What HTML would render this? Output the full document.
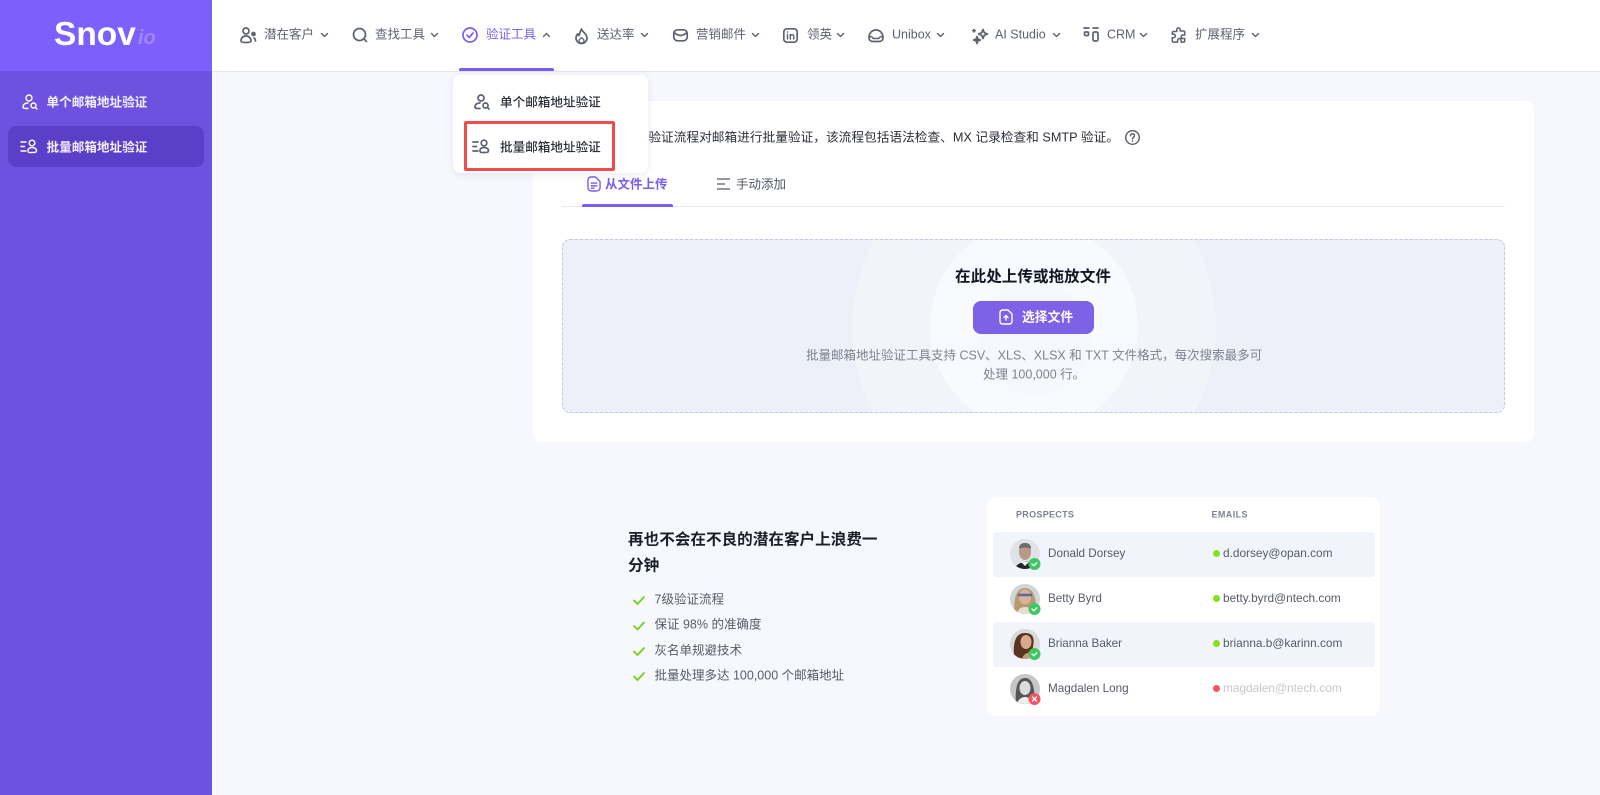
<!DOCTYPE html>
<html lang="zh"><head><meta charset="utf-8"><title>批量邮箱地址验证</title>
<style>
*{box-sizing:border-box}
html,body{margin:0;padding:0;width:1600px;height:795px;overflow:hidden;background:#f6f8fd;font-family:"Liberation Sans","Noto Sans CJK SC",sans-serif}
.a{position:absolute}
.t{position:absolute;white-space:nowrap;transform:translateY(-50%);line-height:1.2}
svg{position:absolute;overflow:visible;fill:none}
.n{font-size:12.5px;color:#5c6270;top:35px}
.i{stroke:#5c6270;stroke-width:1.7;stroke-linecap:round;stroke-linejoin:round}
.c{stroke-width:1.4}
.row{position:absolute;left:993px;width:382px;height:45px;background:#f1f4fb;border-radius:3px}
.nm{font-size:11.700px;color:#565b66;left:1048px}
.em{font-size:11.850px;color:#565b66;left:1223px}
.dot{position:absolute;left:1212.500px;width:7px;height:7px;border-radius:50%;background:#86e01a}
.ck{font-size:12.500px;color:#565c68;left:654.500px}
</style></head><body>
<!-- sidebar -->
<div class="a" style="left:0;top:0;width:212px;height:795px;background:#6c53df"></div>
<div class="a" style="left:0;top:0;width:212px;height:71px;background:#7b60fb"></div>
<div class="t" style="left:54px;top:35px;font-size:33.500px;font-weight:700;color:#fff">Snov</div>
<div class="t" style="left:138px;top:38px;font-size:20px;font-weight:700;font-style:italic;color:#9c87fc">io</div>
<div class="a" style="left:8px;top:126px;width:196px;height:41px;border-radius:8px;background:#5a3fc8"></div>
<svg style="left:22px;top:94px" width="16" height="16" viewBox="0 0 16 16" stroke="#fff" stroke-width="1.400" stroke-linecap="round"><circle cx="7" cy="4" r="3"/><path d="M6 9C3 9 1 10.500 1 13c0 1.500 2 1.500 5 1.500"/><circle cx="11.500" cy="11.500" r="2.500"/><path d="M13.500 13.500l1.500 1.500"/></svg>
<div class="t" style="left:46.500px;top:102.500px;font-size:12.600px;font-weight:700;color:#f3f0ff">单个邮箱地址验证</div>
<svg style="left:20px;top:139px" width="18" height="15" viewBox="0 0 18 15" stroke="#fff" stroke-width="1.400" stroke-linecap="round"><path d="M1 3h5M1 7.500h3.500M1 12h5"/><circle cx="12" cy="4" r="2.800"/><path d="M8 11.500c0-2 2-3 4-3s4.500 1 4.500 3-1.500 2-4.500 2-4 .5-4-2z"/></svg>
<div class="t" style="left:46.500px;top:147.500px;font-size:12.600px;font-weight:700;color:#f3f0ff">批量邮箱地址验证</div>
<!-- header -->
<div class="a" style="left:212px;top:0;width:1388px;height:72px;background:#fff;border-bottom:1px solid #e3e6ed"></div>
<div class="a" style="left:459px;top:68px;width:95px;height:3px;background:#7b5cf0;border-radius:2px 2px 0 0"></div>
<svg class="i" style="left:240px;top:27px" width="17" height="17" viewBox="0 0 17 17"><circle cx="6" cy="4" r="3"/><path d="M1 14c0-3 2-5 5-5s5 2 5 5c0 1-1 1.500-5 1.500S1 15 1 14z"/><circle cx="13.500" cy="7" r="1.500" fill="#5c6270"/><path d="M14 11c1 .5 1.500 1.500 1.500 3"/></svg>
<div class="t n" style="left:264px">潜在客户</div>
<svg class="i" style="left:352px;top:27px" width="16" height="16" viewBox="0 0 16 16" stroke-width="1.900"><circle cx="7.500" cy="7.500" r="6"/><path d="M12 12l2.500 2.500"/></svg>
<div class="t n" style="left:375px">查找工具</div>
<svg class="i" style="left:462px;top:27px;stroke:#7b5cf0" width="16" height="16" viewBox="0 0 16 16"><circle cx="8" cy="8" r="7"/><path d="M5 8.200l2.200 2.200L11 6"/></svg>
<div class="t n" style="left:486px;color:#7b5cf0">验证工具</div>
<svg class="i" style="left:575px;top:28px" width="13" height="16" viewBox="0 0 13 16"><path d="M6.500 1c.5 3 5.500 4.500 5.500 9A5.500 5.500 0 0 1 1 10c0-2 .8-3.200 1.800-4.200.3 1.300.8 1.700 1.300 1.700C4.700 5.500 5.500 3 6.500 1z"/><path d="M6.500 15c-1.500 0-2.500-1-2.500-2.300 0-1.500 1.700-2.200 2.500-3.200.8 1 2.500 1.700 2.500 3.200C9 14 8 15 6.500 15z" stroke-width="1.300"/></svg>
<div class="t n" style="left:597px">送达率</div>
<svg class="i" style="left:673px;top:29px" width="15" height="12.500" viewBox="0 0 15 12.500"><rect x=".8" y=".8" width="13.400" height="11" rx="3.800"/><path d="M1.200 3.800C4 5.800 5.500 6.500 7.500 6.500s3.500-.7 6.300-2.700"/></svg>
<div class="t n" style="left:696px">营销邮件</div>
<svg class="i" style="left:783px;top:28px" width="15" height="15" viewBox="0 0 15 15"><rect x=".8" y=".8" width="13.400" height="13.400" rx="3.200"/><path stroke-width="1.400" d="M4.500 6.500v4.500M4.500 4v.3M7.300 11V6.500M7.300 8.500c0-2 3.500-2.700 3.500 0V11"/></svg>
<div class="t n" style="left:807px">领英</div>
<svg class="i" style="left:868px;top:29px" width="16" height="13.500" viewBox="0 0 16 13.500"><path d="M1 8.500C1 4 4 1 8 1s7 3 7 7.500c0 2.700-1.700 4-4 4H5c-2.300 0-4-1.300-4-4z"/><path d="M1.300 7.500c2.700 0 3.500 1 4 2h5.400c.5-1 1.300-2 4-2" stroke-width="1.500"/></svg>
<div class="t n" style="left:892px">Unibox</div>
<svg class="i" style="left:972px;top:28px" width="17" height="16" viewBox="0 0 17 16" stroke-width="1.300"><path d="M11 1.500l1.300 3.200 3.200 1.300-3.200 1.300L11 10.500 9.700 7.300 6.500 6l3.200-1.300z"/><path d="M5 8.500l.9 2.600 2.600.9-2.600.9L5 15.500l-.9-2.600L1.500 12l2.600-.9z" fill="#5c6270"/><path d="M2 1.500v2.400M.8 2.700h2.400"/></svg>
<div class="t n" style="left:995px">AI Studio</div>
<svg class="i" style="left:1083px;top:27px" width="16" height="15" viewBox="0 0 16 15"><path d="M1 1h5M10 1h5"/><rect x="1.500" y="5" width="4" height="3.500" rx="1"/><rect x="10" y="5" width="5" height="9" rx="1.500"/></svg>
<div class="t n" style="left:1107px">CRM</div>
<svg class="i" style="left:1171px;top:27px" width="15" height="16" viewBox="0 0 16 18"><path d="M6 5V3a2 2 0 0 1 4 0v1.500h3.500c1 0 1.500.5 1.500 1.500v3h-2a2 2 0 0 0 0 4h2v2.500c0 1-.5 1.500-1.500 1.500H11v-2a2 2 0 0 0-4 0v2H2.500C1.500 17 1 16.500 1 15.500V12h1.500a2 2 0 0 0 0-4H1V6.500C1 5.500 1.500 5 2.500 5z"/></svg>
<div class="t n" style="left:1195px">扩展程序</div>
<svg class="i c" style="left:320.500px;top:32.500px" width="7" height="4" viewBox="0 0 7 4"><path d="M.5.500L3.500 3.500 6.500.500"/></svg>
<svg class="i c" style="left:430.500px;top:32.500px" width="7" height="4" viewBox="0 0 7 4"><path d="M.5.500L3.500 3.500 6.500.500"/></svg>
<svg class="i c" style="left:542.500px;top:32.500px" width="7" height="4" viewBox="0 0 7 4"><path d="M.5 3.500L3.500.5l3 3"/></svg>
<svg class="i c" style="left:640.500px;top:32.500px" width="7" height="4" viewBox="0 0 7 4"><path d="M.5.500L3.500 3.500 6.500.500"/></svg>
<svg class="i c" style="left:751.500px;top:32.500px" width="7" height="4" viewBox="0 0 7 4"><path d="M.5.500L3.500 3.500 6.500.500"/></svg>
<svg class="i c" style="left:836.500px;top:32.500px" width="7" height="4" viewBox="0 0 7 4"><path d="M.5.500L3.500 3.500 6.500.500"/></svg>
<svg class="i c" style="left:936.500px;top:32.500px" width="7" height="4" viewBox="0 0 7 4"><path d="M.5.500L3.500 3.500 6.500.500"/></svg>
<svg class="i c" style="left:1052.500px;top:32.500px" width="7" height="4" viewBox="0 0 7 4"><path d="M.5.500L3.500 3.500 6.500.500"/></svg>
<svg class="i c" style="left:1139.500px;top:32.500px" width="7" height="4" viewBox="0 0 7 4"><path d="M.5.500L3.500 3.500 6.500.500"/></svg>
<svg class="i c" style="left:1251.500px;top:32.500px" width="7" height="4" viewBox="0 0 7 4"><path d="M.5.500L3.500 3.500 6.500.500"/></svg>
<!-- main card -->
<div class="a" style="left:533px;top:101px;width:1001px;height:341px;background:#fff;border-radius:8px"></div>
<div class="t" style="right:481px;top:138px;font-size:12.700px;color:#2b2f38">使用7级验证流程对邮箱进行批量验证，该流程包括语法检查、MX 记录检查和 SMTP 验证。</div>
<svg style="left:1125px;top:130px" width="15" height="15" viewBox="0 0 15 15" stroke="#555b68" stroke-width="1.400" stroke-linecap="round"><circle cx="7.500" cy="7.500" r="6.800"/><path d="M5.500 5.800c0-2.600 4-2.600 4 0 0 1.600-2 1.500-2 3.200"/><path d="M7.500 11v.2"/></svg>
<svg style="left:587px;top:176px" width="14" height="16" viewBox="0 0 15 17" stroke="#7b5cf0" stroke-width="1.500" stroke-linecap="round" stroke-linejoin="round"><path d="M4.500 1H9l5 5v6c0 2.500-1.500 4-4 4H5c-2.500 0-4-1.500-4-4V5c0-2.500 1-4 3.500-4z"/><path d="M4.500 7.500h6M4.500 10.500h6M4.500 13h3"/></svg>
<div class="t" style="left:605px;top:184.500px;font-size:12.500px;font-weight:700;color:#7b5cf0">从文件上传</div>
<div class="a" style="left:562px;top:206px;width:943px;height:1px;background:#e8ebf2"></div>
<div class="a" style="left:582px;top:204px;width:91px;height:3px;background:#7b5cf0;border-radius:2px 2px 0 0"></div>
<svg style="left:717px;top:178px" width="14" height="12" viewBox="0 0 14 12" stroke="#555b68" stroke-width="1.200"><path d="M0 1h13M0 6h8M0 11h13"/></svg>
<div class="t" style="left:736px;top:184.500px;font-size:12.500px;color:#4f5561">手动添加</div>
<!-- upload -->
<div class="a" style="left:562px;top:239px;width:943px;height:174px;background:#edf0f8;border:1px dashed #c3c9dc;border-radius:8px;overflow:hidden">
<div class="a" style="left:289px;top:-95px;width:364px;height:364px;border-radius:50%;background:#f2f4fa"></div>
<div class="a" style="left:367px;top:-18px;width:208px;height:208px;border-radius:50%;background:#f9fafe"></div>
<div class="a" style="left:415px;top:42px;width:113px;height:113px;border-radius:50%;background:#f6f8fd"></div>
</div>
<div class="t" style="left:955px;top:277.500px;font-size:15.600px;font-weight:700;color:#111722">在此处上传或拖放文件</div>
<div class="a" style="left:973px;top:301px;width:121px;height:33px;background:#7d62e8;border-radius:8px"></div>
<svg style="left:999px;top:309px" width="14" height="16" viewBox="0 0 14 16" stroke="#fff" stroke-width="1.400" stroke-linecap="round" stroke-linejoin="round"><path d="M4 1h5l4 4v7c0 2-1 3-3 3H4c-2 0-3-1-3-3V4c0-2 1-3 3-3z"/><path d="M7 11V6.500M5 8.500l2-2 2 2"/></svg>
<div class="t" style="left:1022px;top:316.500px;font-size:12.800px;font-weight:700;color:#fff">选择文件</div>
<div class="t" style="left:806px;top:355.500px;font-size:12.500px;color:#7c828e">批量邮箱地址验证工具支持 CSV、XLS、XLSX 和 TXT 文件格式，每次搜索最多可</div>
<div class="t" style="left:983px;top:375px;font-size:12.500px;color:#7c828e">处理 100,000 行。</div>
<!-- dropdown -->
<div class="a" style="left:453px;top:75px;width:195px;height:98px;background:#fff;border-radius:8px;box-shadow:0 2px 8px rgba(70,80,120,.1)"></div>
<svg class="i" style="left:474px;top:94px" width="16" height="16" viewBox="0 0 16 16" stroke-width="1.300"><circle cx="7" cy="4" r="3"/><path d="M6 9C3 9 1 10.500 1 13c0 1.500 2 1.500 5 1.500"/><circle cx="11.500" cy="11.500" r="2.500"/><path d="M13.500 13.500l1.500 1.500"/></svg>
<div class="t" style="left:500px;top:102.500px;font-size:12.600px;font-weight:500;color:#2b2f38">单个邮箱地址验证</div>
<svg class="i" style="left:472px;top:139px" width="18" height="15" viewBox="0 0 18 15" stroke-width="1.200"><path d="M1 3h5M1 7.500h3.500M1 12h5"/><circle cx="12" cy="4" r="2.800"/><path d="M8 11.500c0-2 2-3 4-3s4.500 1 4.500 3-1.500 2-4.500 2-4 .5-4-2z"/></svg>
<div class="t" style="left:500px;top:147.500px;font-size:12.600px;font-weight:500;color:#2b2f38">批量邮箱地址验证</div>
<div class="a" style="left:464px;top:121px;width:150.500px;height:50px;border:3px solid #f24b4b;border-radius:2px"></div>
<!-- left feature -->
<div class="t" style="left:628px;top:540.500px;font-size:15.600px;font-weight:700;color:#1a1f2a">再也不会在不良的潜在客户上浪费一</div>
<div class="t" style="left:628px;top:566.500px;font-size:15.600px;font-weight:700;color:#1a1f2a">分钟</div>
<svg style="left:633px;top:595px" width="12" height="90" viewBox="0 0 12 90" stroke="#72d00f" stroke-width="1.700"><path d="M.5 5l4 4L11.500 1.500M.5 30.500l4 4 7-7.500M.5 56l4 4 7-7.500M.5 81l4 4 7-7.500"/></svg>
<div class="t ck" style="top:599.500px">7级验证流程</div>
<div class="t ck" style="top:625px">保证 98% 的准确度</div>
<div class="t ck" style="top:650.500px">灰名单规避技术</div>
<div class="t ck" style="top:675.500px">批量处理多达 100,000 个邮箱地址</div>
<!-- table -->
<div class="a" style="left:987px;top:497px;width:393px;height:219px;background:#fff;border-radius:10px"></div>
<div class="t" style="left:1016px;top:515px;font-size:9px;font-weight:700;letter-spacing:.3px;color:#7b818d">PROSPECTS</div>
<div class="t" style="left:1211.500px;top:515px;font-size:9px;font-weight:700;letter-spacing:.4px;color:#7b818d">EMAILS</div>
<div class="row" style="top:532px"></div>
<div class="row" style="top:622px"></div>
<svg style="left:1010px;top:539px" width="36" height="170" viewBox="0 0 36 170">
<defs><clipPath id="c1"><circle cx="15" cy="15" r="15"/></clipPath><clipPath id="c2"><circle cx="15" cy="60" r="15"/></clipPath><clipPath id="c3"><circle cx="15" cy="105" r="15"/></clipPath><clipPath id="c4"><circle cx="15" cy="150" r="15"/></clipPath></defs>
<g clip-path="url(#c1)"><rect width="30" height="30" fill="#dfe3e8"/><path d="M5 30c1-5 5-6 10-7s9 2 10 7z" fill="#23262d"/><ellipse cx="15" cy="13" rx="6" ry="8" fill="#b99a86"/><path d="M9 10c0-5 3-6 6-6s6 1 6 6c-2-2-10-2-12 0z" fill="#6c6c6c"/><path d="M11 23l4 4 4-4z" fill="#eee"/></g>
<g clip-path="url(#c2)"><rect y="45" width="30" height="30" fill="#cfd4d6"/><path d="M5 75c-2-12 0-26 10-26s12 14 10 26z" fill="#b89a70"/><ellipse cx="15" cy="58" rx="6" ry="7.500" fill="#d8b39a"/><path d="M8 56h14" stroke="#5a6a98" stroke-width="2.500"/><path d="M7 75c1-6 5-7 8-7s7 1 8 7z" fill="#e8dcd0"/></g>
<g clip-path="url(#c3)"><rect y="90" width="30" height="30" fill="#d9d9d8"/><path d="M4 118c-1-14 1-24 11-24s9 8 8 14-3 12-8 12z" fill="#5a3420"/><ellipse cx="16" cy="103" rx="5.500" ry="7" fill="#d9a98d"/><path d="M12 120c1-4 5-7 8-6 2 1 3 3 3 6z" fill="#c99a80"/></g>
<g clip-path="url(#c4)"><rect y="135" width="30" height="30" fill="#c6c6c6"/><path d="M6 165c-1-12 0-26 9-26s10 14 9 26z" fill="#555"/><ellipse cx="15" cy="149" rx="5.500" ry="7" fill="#dcdcdc"/><path d="M7 165c1-5 5-7 8-7s7 2 8 7z" fill="#eee"/></g>
<g stroke="#fff" stroke-width="1.300" stroke-linecap="round" stroke-linejoin="round"><circle cx="24.500" cy="25" r="6" fill="#3fc763" stroke="none"/><path d="M22 25l1.800 1.800 3-3"/><circle cx="24.500" cy="70" r="6" fill="#3fc763" stroke="none"/><path d="M22 70l1.800 1.800 3-3"/><circle cx="24.500" cy="115" r="6" fill="#3fc763" stroke="none"/><path d="M22 115l1.800 1.800 3-3"/><circle cx="24.500" cy="160" r="6" fill="#f4555f" stroke="none"/><path d="M22.500 158l4 4M26.500 158l-4 4"/></g></svg>
<div class="t nm" style="top:553.500px">Donald Dorsey</div>
<div class="t nm" style="top:598.500px">Betty Byrd</div>
<div class="t nm" style="top:643.500px">Brianna Baker</div>
<div class="t nm" style="top:688.500px">Magdalen Long</div>
<div class="dot" style="top:550px"></div><div class="dot" style="top:595px"></div><div class="dot" style="top:640px"></div><div class="dot" style="top:685px;background:#f4555f"></div>
<div class="t em" style="top:553px">d.dorsey@opan.com</div>
<div class="t em" style="top:598px">betty.byrd@ntech.com</div>
<div class="t em" style="top:643px">brianna.b@karinn.com</div>
<div class="t em" style="top:688px;color:#c4c7cc">magdalen@ntech.com</div>
</body></html>
